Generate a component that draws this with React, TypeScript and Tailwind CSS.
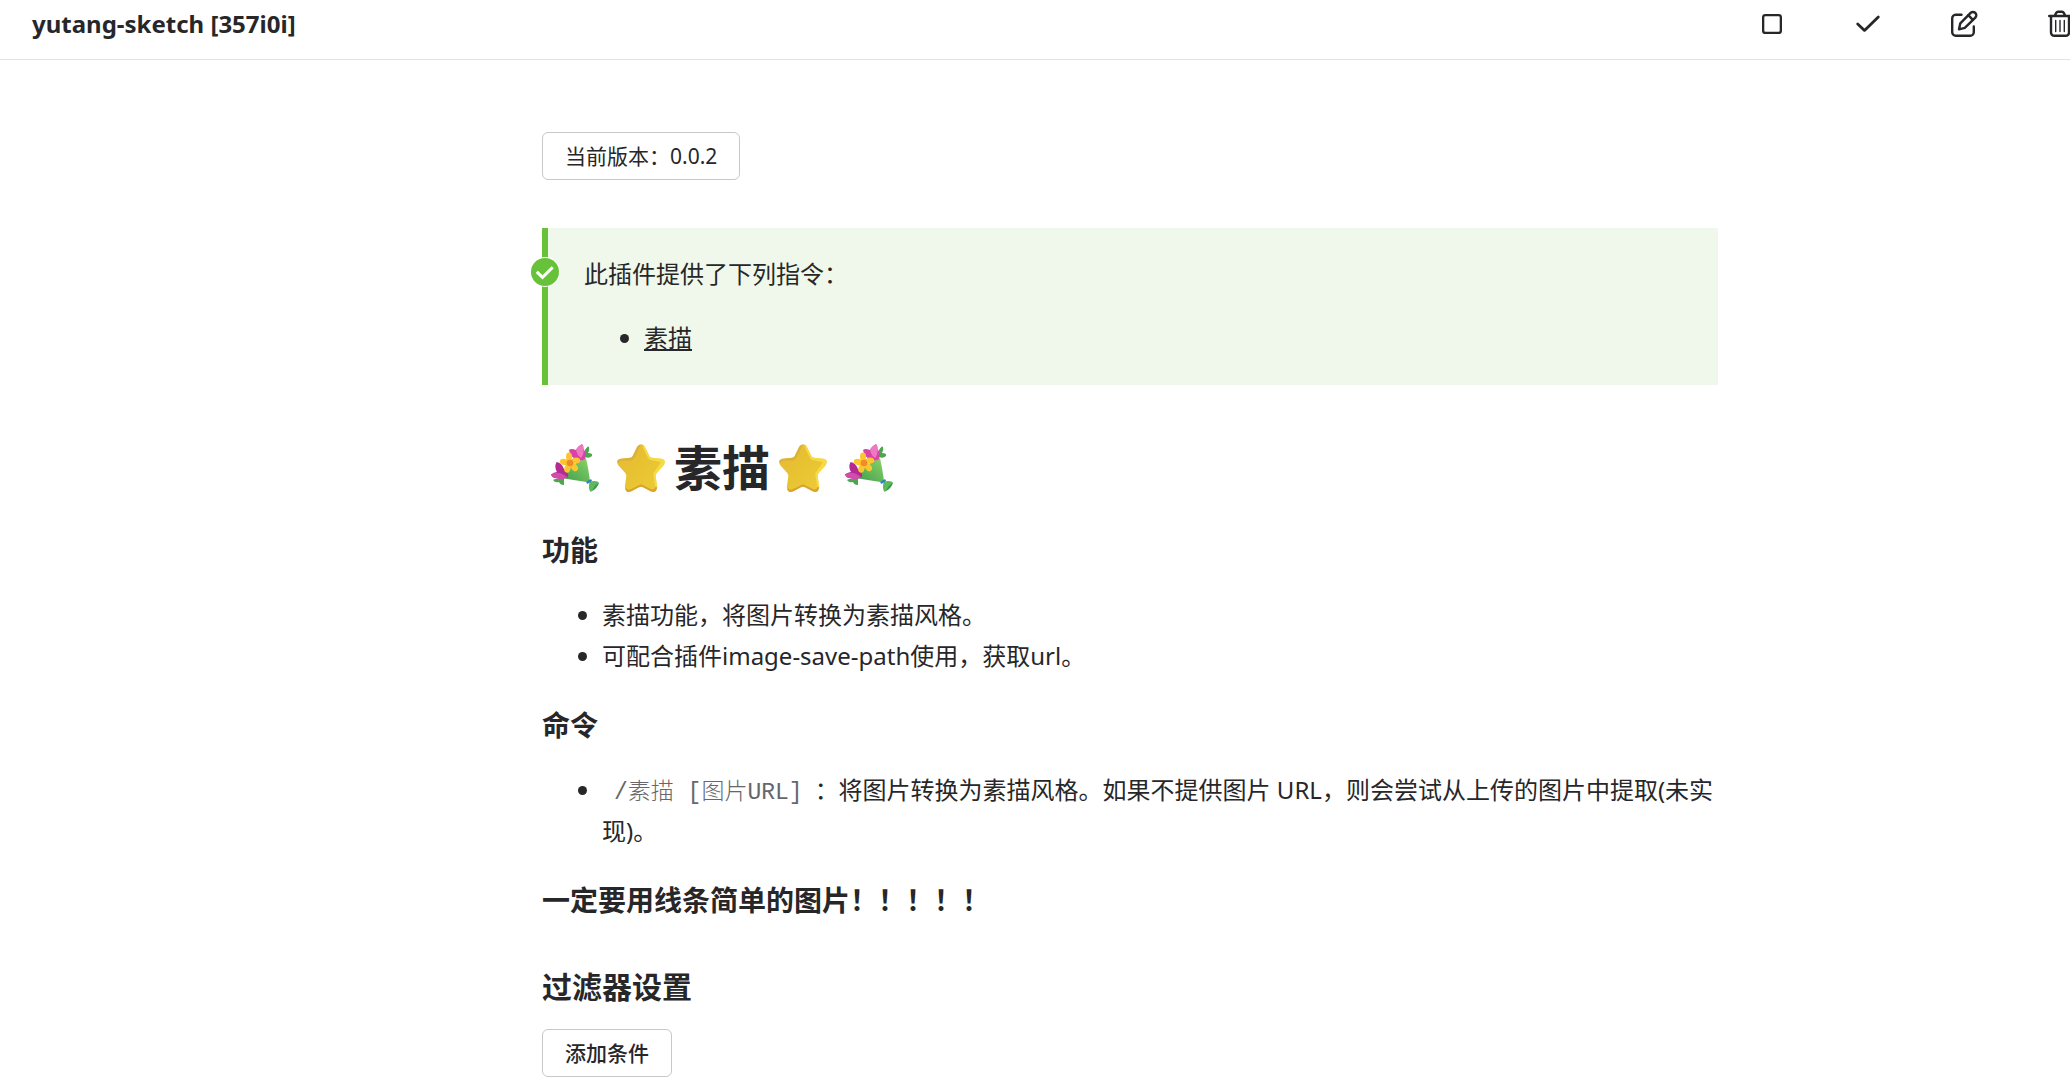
import type { FC, ReactNode } from 'react';

interface IconButtonProps {
  label: string;
  children: ReactNode;
}

const IconButton: FC<IconButtonProps> = ({ label, children }) => (
  <button type="button" aria-label={label} className="flex w-24 items-center justify-center">
    {children}
  </button>
);

const SquareIcon: FC = () => (
  <svg viewBox="0 0 20 20" className="size-5" fill="none" stroke="currentColor" strokeWidth="2.3">
    <rect x="1.15" y="1.15" width="17.7" height="17.7" rx="2.2" />
  </svg>
);

const CheckIcon: FC = () => (
  <svg
    viewBox="0 0 26 20"
    className="h-5 w-[26px]"
    fill="none"
    stroke="currentColor"
    strokeWidth="2.8"
    strokeLinecap="round"
    strokeLinejoin="round"
  >
    <path d="M2.700 10l6.800 6.400L23.300 3" />
  </svg>
);

const EditIcon: FC = () => (
  <svg
    viewBox="0 0 28 28"
    className="size-7"
    fill="none"
    stroke="currentColor"
    strokeWidth="2.4"
    strokeLinecap="round"
    strokeLinejoin="round"
  >
    <path d="M11.500 4.800H5.600A3.500 3.500 0 0 0 2.200 8.300V22.300A3.500 3.500 0 0 0 5.700 25.800H20.300A3.500 3.500 0 0 0 23.800 22.300V16.500" />
    <path d="M9 19.300l1.300-6L20.600 2.900a3.200 3.200 0 0 1 4.700 4.700L14.800 17.800z" />
    <path d="M18.300 5.200l4.600 4.600" />
  </svg>
);

const TrashIcon: FC = () => (
  <svg
    viewBox="0 0 24 28"
    className="h-7 w-6"
    fill="none"
    stroke="currentColor"
    strokeWidth="2.4"
    strokeLinecap="round"
    strokeLinejoin="round"
  >
    <path d="M1.200 6H22.800" />
    <path d="M6.800 5.700L8.200 2.900Q8.800 1.800 10 1.800H14Q15.200 1.800 15.800 2.900L17.200 5.700" />
    <path d="M3 6.200V22.600A3.200 3.200 0 0 0 6.200 25.800H17.800A3.200 3.200 0 0 0 21 22.600V6.200" />
    <path d="M7.700 10.500V21.500M12 10.500V21.500M16.300 10.500V21.500" strokeWidth="1.400" />
  </svg>
);

const Star: FC = () => (
  <svg viewBox="0 0 48 48" className="size-12" role="img" aria-label="⭐">
    <defs>
      <linearGradient id="starFill" x1="0" y1="0" x2="1" y2="1">
        <stop offset="0%" stopColor="#e6b83a" />
        <stop offset="45%" stopColor="#e8c231" />
        <stop offset="100%" stopColor="#edcc38" />
      </linearGradient>
      <clipPath id="starClip">
        <path d="M20.300 2.500Q24-2 27.700 2.500L32.500 12.200Q33.300 13.600 35 13.800L44.500 14.800Q50 16.500 46.500 21.500L39.500 29.300Q38.500 31 38.700 32.500L40.200 43Q39.500 49.500 34 47.500L26 43.200Q24 42.200 22 43.200L14 47.500Q8.500 49.500 7.800 43L9.300 32.500Q9.500 31 8.500 29.300L1.500 21.500Q-2 16.500 3.500 14.800L13 13.800Q14.700 13.600 15.500 12.200Z" />
      </clipPath>
    </defs>
    <g clipPath="url(#starClip)">
      <rect width="48" height="48" fill="url(#starFill)" />
      <path d="M0 18L3 15 14 15 17 12 22 1" fill="none" stroke="#d2a83c" strokeWidth="3" opacity=".6" />
      <path d="M27 2L33 14 47 17 38 30 40 44" fill="none" stroke="#fbe04a" strokeWidth="3.500" opacity=".75" />
      <path d="M8 45Q10 49 15 46.500L24 42.200 34 47Q39 48 40 43" fill="none" stroke="#c98c2c" strokeWidth="3.500" opacity=".6" />
    </g>
  </svg>
);

const Bouquet: FC = () => (
  <svg viewBox="0 0 48 48" className="size-12" role="img" aria-label="💐">
    <defs>
      <linearGradient id="wrap" x1="0" y1="1" x2="1" y2="0">
        <stop offset="0%" stopColor="#3f9b50" />
        <stop offset="55%" stopColor="#67bb5b" />
        <stop offset="100%" stopColor="#8bd465" />
      </linearGradient>
    </defs>
    {/* leaves */}
    <path d="M34 6Q37 1 38 3Q39 6 37 9Q42 9 41 12Q38 15 34 13ZM2 36Q5 34 9 35L13 33L13 41Q9 41 8 38Q4 39 2 36Z" fill="#4da64e" />
    {/* paper cone */}
    <path d="M35 14Q37.500 25 39 37Q38 39 35.500 38L10 34L20 22Z" fill="url(#wrap)" />
    <path d="M38.500 38Q44 36 48 38.500Q46 45 39.500 48Q37 45 38.500 38Z" fill="#5cba5b" />
    <path d="M41 47Q46 44 48 39Q44 40 41 47Z" fill="#3c9554" />
    <path d="M36.500 38.500L39.800 36.500" stroke="#2b7fd0" strokeWidth="2.200" strokeLinecap="round" />
    {/* tulips */}
    <path d="M18 6Q20 4 25 6Q26 3 31 0Q33 2 32.500 5Q36 9 34 15Q30 18 26 16Q19 13 18 6Z" fill="#d943a6" />
    <path d="M25 6Q27 2.500 31 0Q33 2 32.500 5Q33 11 30 14Q26 11 25 6Z" fill="#ee78c4" />
    <path d="M5.500 18Q11 19 13 25Q18 28 17 33Q12 36 7 34Q2 35 0 30.500Q3 28 6 28Q3 23 5.500 18Z" fill="#b12b92" />
    <path d="M0 30.500Q8 26 16 33Q10 37 5 34Q1 34 0 30.500Z" fill="#d14cac" />
    {/* yellow blossom */}
    <g fill="#fbc62f">
      <ellipse cx="18" cy="12.700" rx="3" ry="4.200" />
      <ellipse cx="25" cy="16.500" rx="4.200" ry="3" />
      <ellipse cx="23.500" cy="23.500" rx="3.200" ry="4" transform="rotate(-35 23.500 23.500)" />
      <ellipse cx="16.500" cy="24.500" rx="3.100" ry="4.200" transform="rotate(18 16.500 24.500)" />
      <ellipse cx="13" cy="18" rx="4.300" ry="3.100" transform="rotate(12 13 18)" />
      <circle cx="19" cy="19" r="4.500" />
    </g>
    <circle cx="19" cy="19" r="3.300" fill="#f28a2c" />
  </svg>
);

const SuccessBadge: FC = () => (
  <svg viewBox="0 0 30 30" className="absolute -left-[18px] top-[29px] size-[30px]" aria-hidden="true">
    <circle cx="15" cy="15" r="15" fill="#fff" />
    <circle cx="15" cy="15" r="14" fill="#67c23a" />
    <path d="M6.800 14.800l5.700 5.500 10.200-10" fill="none" stroke="#fff" strokeWidth="3" />
  </svg>
);

const App: FC = () => {
  return (
    <div className="overflow-hidden bg-white font-['Noto_Sans','Noto_Sans_CJK_SC',sans-serif] text-2xl/[41px] text-[#27272a]">
      {/* the plugin view is wider than the window, its right edge is cut off */}
      <div className="-mr-[190px]">
        <header className="flex h-[60px] items-stretch justify-between border-b border-[#e2e2e5] pb-3 pl-8 pr-[152px]">
          <h1 className="self-center text-2xl font-bold">yutang-sketch [357i0i]</h1>
          <div className="flex">
            <IconButton label="停用插件">
              <SquareIcon />
            </IconButton>
            <IconButton label="保存配置">
              <CheckIcon />
            </IconButton>
            <IconButton label="重命名">
              <EditIcon />
            </IconButton>
            <IconButton label="移除插件">
              <TrashIcon />
            </IconButton>
          </div>
        </header>

        <main className="mx-auto max-w-[1176px] pb-3 pt-[72px]">
          <button type="button" className="block h-12 rounded-md border border-[#c8c8cc] px-[22px] text-[21px]">
            当前版本：0.0.2
          </button>

          <section className="relative mt-12 border-l-[6px] border-[#67c23a] bg-[#f0f8eb] px-9 pb-[27px] pt-[25px]">
            <SuccessBadge />
            <p>此插件提供了下列指令：</p>
            <ul className="mt-[23px] list-disc pl-[60px]">
              <li>
                <a href="#sketch" className="underline">
                  素描
                </a>
              </li>
            </ul>
          </section>

          <h1 id="sketch" className="mt-[51px] flex h-16 items-center pl-[9px] text-5xl font-bold">
            <Bouquet />
            <span className="ml-[18px]">
              <Star />
            </span>
            <span className="mx-[9px]">素描</span>
            <Star />
            <span className="ml-[18px]">
              <Bouquet />
            </span>
          </h1>

          <h3 className="mt-[30px] text-[28px]/[41px] font-bold">功能</h3>
          <ul className="mt-[23px] list-disc pl-[60px]">
            <li>素描功能，将图片转换为素描风格。</li>
            <li>可配合插件image-save-path使用，获取url。</li>
          </ul>

          <h3 className="mt-[29px] text-[28px]/[41px] font-bold">命令</h3>
          <ul className="mt-[23px] list-disc pl-[60px]">
            <li>
              <code className="px-3 font-['Liberation_Mono','Noto_Sans_CJK_SC',monospace] text-[23px]/[23px] font-light text-[#66666b]">
                /素描 [图片URL]
              </code>
              ：将图片转换为素描风格。如果不提供图片 URL，则会尝试从上传的图片中提取(未实现)。
            </li>
          </ul>

          <h3 className="mt-[29px] text-[28px]/[41px] font-bold">一定要用线条简单的图片！！！！！</h3>

          <h2 className="mt-[45px] text-[30px]/[41px] font-bold">过滤器设置</h2>
          <button
            type="button"
            className="mt-[22px] block h-12 rounded-md border border-[#c8c8cc] px-[22px] text-[21px] font-medium"
          >
            添加条件
          </button>
        </main>
      </div>
    </div>
  );
};

export default App;
